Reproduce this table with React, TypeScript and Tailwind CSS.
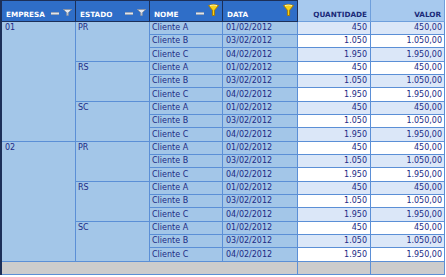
import React from "react";

const empresas = ["01", "02"];
const estados = ["PR", "RS", "SC"];
const clientes = [
  { nome: "Cliente A", data: "01/02/2012", qtd: "450", valor: "450,00" },
  { nome: "Cliente B", data: "03/02/2012", qtd: "1.050", valor: "1.050,00" },
  { nome: "Cliente C", data: "04/02/2012", qtd: "1.950", valor: "1.950,00" },
];

const GrayFunnel = () => (
  <svg width="9" height="7" viewBox="0 0 9 7" className="mt-[8px] shrink-0">
    <path d="M0.5 0.5 H8.5 L5.2 3.8 V6.5 H3.8 V3.8 Z" fill="#e4e8ef" stroke="#8d97a8" strokeWidth="1" />
  </svg>
);

const YellowFunnel = () => (
  <svg width="11" height="12" viewBox="0 0 11 12" className="mt-[3px] shrink-0">
    <path d="M0.5 1.5 Q5.5 -0.3 10.5 1.5 L6.6 6.2 V11.5 H4.4 V6.2 Z" fill="#f6d21a" stroke="#a47a05" strokeWidth="1" />
    <path d="M1.8 1.6 Q5.5 0.6 9.2 1.6" fill="none" stroke="#fff3a0" strokeWidth="1" />
  </svg>
);

const Minus = () => (
  <div className="mt-[11px] h-[3px] w-[8px] shrink-0 bg-[#dfe4ec] border-y border-[#9aa6b8]" />
);

const HeadCell = ({
  label,
  width,
  minus,
  funnel,
}: {
  label: string;
  width: string;
  minus?: boolean;
  funnel?: "gray" | "yellow";
}) => (
  <div className={`${width} h-[22px] flex items-start pl-[4px] pr-[3px] bg-[#2f6ec8] border-r border-b border-t border-[#1c2f58]`}>
    <span className="mt-[10px] text-[7.25px] leading-none font-bold text-white">{label}</span>
    <div className="ml-auto flex items-start gap-[4px]">
      {minus && <Minus />}
      {funnel === "gray" && <GrayFunnel />}
      {funnel === "yellow" && <YellowFunnel />}
    </div>
  </div>
);

export default function App() {
  let rowIndex = 0;
  const cells: React.ReactNode[] = [];
  empresas.forEach((emp) => {
    cells.push(
      <div key={`e${emp}`} className="row-span-9 bg-[#a3c6e8] pl-[3px] leading-[12px]">
        {emp}
      </div>
    );
    estados.forEach((uf) => {
      cells.push(
        <div key={`u${emp}${uf}`} className="row-span-3 bg-[#a3c6e8] pl-[2px] leading-[12px]">
          {uf}
        </div>
      );
      clientes.forEach((c) => {
        const odd = rowIndex % 2 === 0;
        rowIndex++;
        const num = odd ? "bg-[#dbe7f8]" : "bg-white";
        cells.push(
          <div key={`n${emp}${uf}${c.nome}`} className="bg-[#a3c6e8] pl-[2px] flex items-center">
            {c.nome}
          </div>,
          <div key={`d${emp}${uf}${c.nome}`} className="bg-[#a3c6e8] pl-[3px] flex items-center">
            {c.data}
          </div>,
          <div key={`q${emp}${uf}${c.nome}`} className={`${num} pr-[3px] flex items-center justify-end`}>
            {c.qtd}
          </div>,
          <div key={`v${emp}${uf}${c.nome}`} className={`${num} pr-[2px] flex items-center justify-end`}>
            {c.valor}
          </div>
        );
      });
    });
  });

  return (
    <div className="w-[446px] h-[277px] bg-white font-['DejaVu_Sans',Verdana,sans-serif]">
      <div className="w-[445px] border-l-2 border-[#1c2f58]">
        <div className="flex">
          <HeadCell label="EMPRESA" width="w-[74px]" minus funnel="gray" />
          <HeadCell label="ESTADO" width="w-[74px]" minus funnel="gray" />
          <HeadCell label="NOME" width="w-[73px]" minus funnel="yellow" />
          <HeadCell label="DATA" width="w-[75px]" funnel="yellow" />
          <div className="w-[73px] h-[22px] flex items-start justify-end pr-[3px] bg-[#a7c9ee] border-r border-b border-[#6f9fdc]">
            <span className="mt-[11px] text-[7.25px] leading-none font-bold text-[#1a2a78]">QUANTIDADE</span>
          </div>
          <div className="w-[74px] h-[22px] flex items-start justify-end pr-[3px] bg-[#a7c9ee] border-r border-b border-[#6f9fdc]">
            <span className="mt-[11px] text-[7.25px] leading-none font-bold text-[#1a2a78]">VALOR</span>
          </div>
        </div>
        <div className="grid grid-cols-[73px_73px_72px_74px_72px_73px] grid-rows-[repeat(6,12px_12px_13px)] gap-px bg-[#5b8fd6] border-r border-b border-[#5b8fd6] text-[8px] text-[#1c2a85]">
          {cells}
        </div>
        <div className="flex h-[13px] border-b border-[#5b8fd6] bg-[#cccccc]">
          <div className="w-[296px] border-r border-[#5b8fd6]" />
          <div className="w-[73px] border-r border-[#5b8fd6]" />
          <div className="w-[74px] border-r border-[#5b8fd6]" />
        </div>
      </div>
    </div>
  );
}
